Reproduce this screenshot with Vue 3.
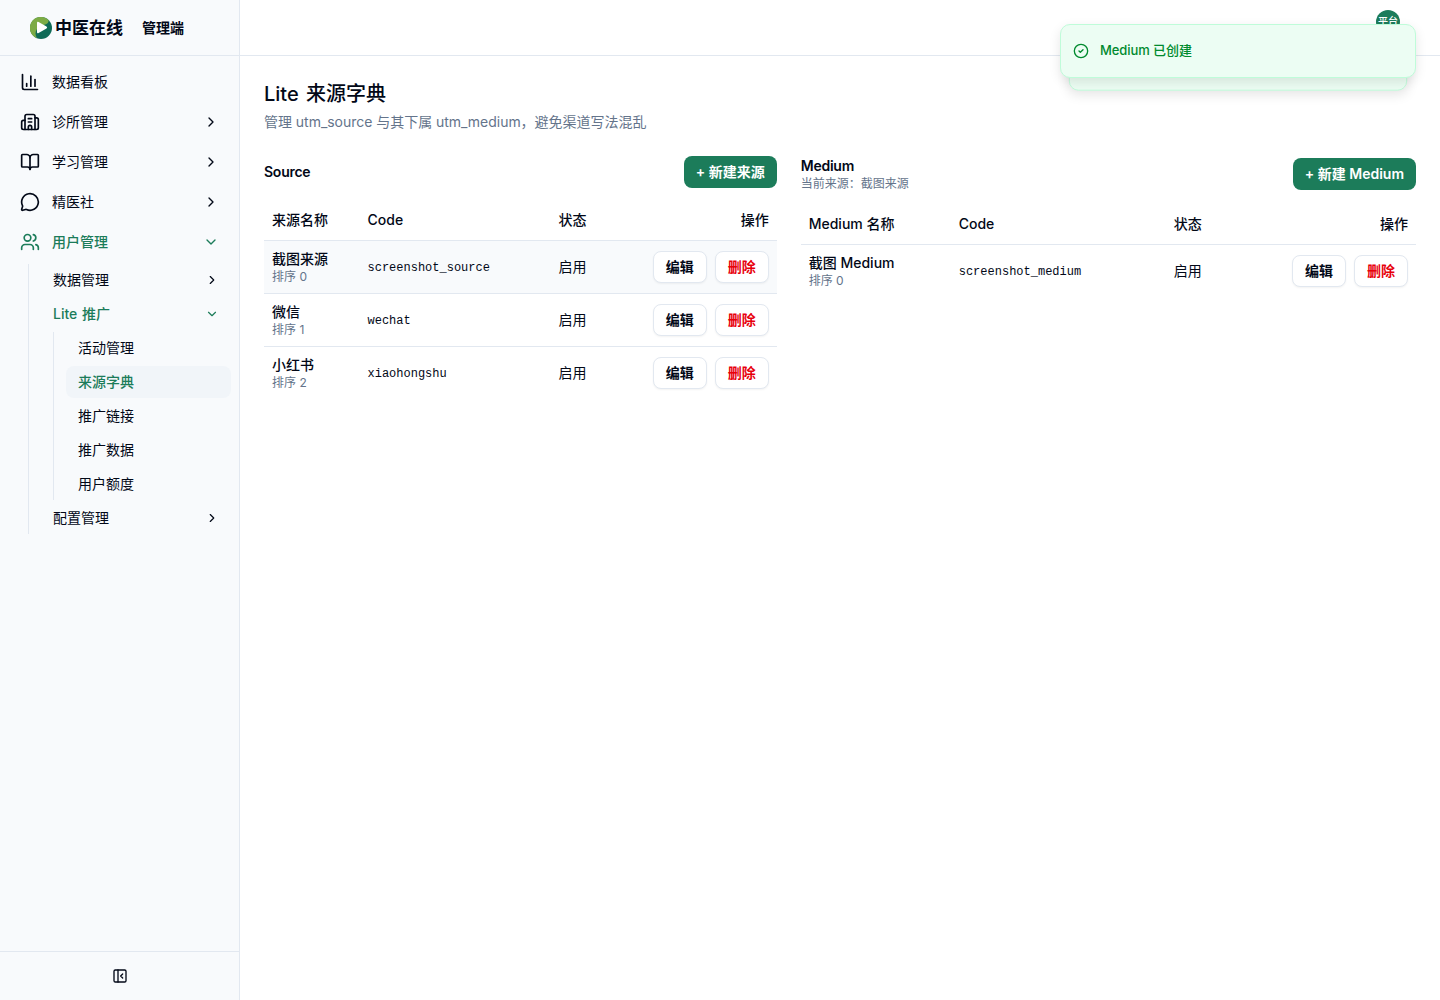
<template>
  <div class="layout">
    <aside class="sidebar">
      <div class="brand">
        <svg class="brand-mark" viewBox="0 0 22 22">
          <circle cx="11" cy="11" r="11" fill="#0f6b57" />
          <path d="M7 21.2A11 11 0 1 1 18.5 3C19 6 16 7.5 13 8L7 12C5 15 5 18 7 21.2z" fill="#7cab45" />
          <path d="M7 6q0-1.8 1.6-1l7.9 4.6q1.3.9 0 1.8l-7.9 4.6q-1.6.8-1.6-1z" fill="#fff" />
        </svg>
        <span class="brand-name">中医在线</span>
        <span class="brand-sub">管理端</span>
      </div>

      <nav class="nav">
        <div
          v-for="item in menu"
          :key="item.label"
          class="nav-item"
          :class="{ active: item.open }"
        >
          <svg class="nav-icon" viewBox="0 0 24 24">
            <path v-for="d in item.icon" :key="d" :d="d" />
          </svg>
          <span class="nav-label">{{ item.label }}</span>
          <svg v-if="item.expandable" class="chevron" viewBox="0 0 24 24">
            <path :d="item.open ? chevronDown : chevronRight" />
          </svg>
        </div>

        <div class="sub-nav">
          <div class="sub-item">
            <span>数据管理</span>
            <svg class="chevron small" viewBox="0 0 24 24"><path :d="chevronRight" /></svg>
          </div>
          <div class="sub-item active">
            <span>Lite 推广</span>
            <svg class="chevron small" viewBox="0 0 24 24"><path :d="chevronDown" /></svg>
          </div>
          <div class="leaf-nav">
            <div
              v-for="leaf in leaves"
              :key="leaf"
              class="leaf"
              :class="{ selected: leaf === current }"
            >{{ leaf }}</div>
          </div>
          <div class="sub-item">
            <span>配置管理</span>
            <svg class="chevron small" viewBox="0 0 24 24"><path :d="chevronRight" /></svg>
          </div>
        </div>
      </nav>

      <div class="sidebar-footer">
        <svg class="collapse-icon" viewBox="0 0 24 24">
          <rect x="3" y="3" width="18" height="18" rx="2" />
          <path d="M9 3v18" />
          <path d="m16 15-3-3 3-3" />
        </svg>
      </div>
    </aside>

    <div class="main">
      <header class="topbar">
        <div class="avatar">平台</div>
      </header>

      <main class="content">
        <div>
          <h1 class="title">Lite 来源字典</h1>
          <p class="subtitle">管理 utm_source 与其下属 utm_medium，避免渠道写法混乱</p>
        </div>

        <div class="panels">
          <section v-for="panel in panels" :key="panel.title" class="panel">
            <div class="panel-head">
              <div>
                <h2 class="panel-title">{{ panel.title }}</h2>
                <p v-if="panel.note" class="note">{{ panel.note }}</p>
              </div>
              <button class="btn primary">{{ panel.create }}</button>
            </div>

            <table class="table" :class="panel.kind">
              <thead>
                <tr>
                  <th class="col-name">{{ panel.nameLabel }}</th>
                  <th class="col-code">Code</th>
                  <th>状态</th>
                  <th class="right">操作</th>
                </tr>
              </thead>
              <tbody>
                <tr v-for="row in panel.rows" :key="row.code" :class="{ picked: row.picked }">
                  <td>
                    <div class="row-name">{{ row.name }}</div>
                    <div class="note">排序 {{ row.sort }}</div>
                  </td>
                  <td class="code">{{ row.code }}</td>
                  <td>启用</td>
                  <td>
                    <div class="actions">
                      <button class="btn outline">编辑</button>
                      <button class="btn outline danger">删除</button>
                    </div>
                  </td>
                </tr>
              </tbody>
            </table>
          </section>
        </div>
      </main>
    </div>

    <div class="toaster">
      <div class="toast back"></div>
      <div class="toast">
        <svg class="toast-icon" viewBox="0 0 24 24">
          <circle cx="12" cy="12" r="10" />
          <path d="m9 12 2 2 4-4" />
        </svg>
        <span class="toast-text">Medium 已创建</span>
      </div>
    </div>
  </div>
</template>

<script setup>
import { ref } from 'vue';

const chevronRight = 'm9 18 6-6-6-6';
const chevronDown = 'm6 9 6 6 6-6';

const menu = [
  {
    label: '数据看板',
    icon: ['M3 3v16a2 2 0 0 0 2 2h16', 'M18 17V9', 'M13 17V5', 'M8 17v-3']
  },
  {
    label: '诊所管理',
    expandable: true,
    icon: [
      'M10 12h4',
      'M10 8h4',
      'M14 21v-3a2 2 0 0 0-4 0v3',
      'M6 10H4a2 2 0 0 0-2 2v7a2 2 0 0 0 2 2h16a2 2 0 0 0 2-2V9a2 2 0 0 0-2-2h-2',
      'M6 21V5a2 2 0 0 1 2-2h8a2 2 0 0 1 2 2v16'
    ]
  },
  {
    label: '学习管理',
    expandable: true,
    icon: [
      'M12 7v14',
      'M3 18a1 1 0 0 1-1-1V4a1 1 0 0 1 1-1h5a4 4 0 0 1 4 4 4 4 0 0 1 4-4h5a1 1 0 0 1 1 1v13a1 1 0 0 1-1 1h-6a3 3 0 0 0-3 3 3 3 0 0 0-3-3z'
    ]
  },
  {
    label: '精医社',
    expandable: true,
    icon: [
      'M2.992 16.342a2 2 0 0 1 .094 1.167l-1.065 3.29a1 1 0 0 0 1.236 1.168l3.413-.998a2 2 0 0 1 1.099.092 10 10 0 1 0-4.777-4.719'
    ]
  },
  {
    label: '用户管理',
    expandable: true,
    open: true,
    icon: [
      'M16 21v-2a4 4 0 0 0-4-4H6a4 4 0 0 0-4 4v2',
      'M16 3.128a4 4 0 0 1 0 7.744',
      'M22 21v-2a4 4 0 0 0-3-3.87',
      'M5 7a4 4 0 1 0 8 0a4 4 0 1 0-8 0'
    ]
  }
];

const leaves = ['活动管理', '来源字典', '推广链接', '推广数据', '用户额度'];
const current = ref('来源字典');

const panels = [
  {
    kind: 'source',
    title: 'Source',
    create: '+ 新建来源',
    nameLabel: '来源名称',
    rows: [
      { name: '截图来源', sort: 0, code: 'screenshot_source', picked: true },
      { name: '微信', sort: 1, code: 'wechat' },
      { name: '小红书', sort: 2, code: 'xiaohongshu' }
    ]
  },
  {
    kind: 'medium',
    title: 'Medium',
    note: '当前来源：截图来源',
    create: '+ 新建 Medium',
    nameLabel: 'Medium 名称',
    rows: [{ name: '截图 Medium', sort: 0, code: 'screenshot_medium' }]
  }
];
</script>

<style>
body {
  background: #fff;
}
</style>

<style scoped>
.layout {
  display: flex;
  height: 100vh;
  overflow: hidden;
  font-family: Inter, "Noto Sans CJK SC", sans-serif;
  font-size: 14px;
  line-height: 20px;
  color: #020817;
}

.layout * {
  box-sizing: border-box;
}

h1,
h2,
p {
  margin: 0;
}

svg {
  flex-shrink: 0;
  fill: none;
  stroke: currentColor;
  stroke-width: 2;
  stroke-linecap: round;
  stroke-linejoin: round;
}

.sidebar {
  width: 240px;
  flex-shrink: 0;
  display: flex;
  flex-direction: column;
  background: #f8fafc;
  border-right: 1px solid #e2e8f0;
}

.brand {
  height: 56px;
  display: flex;
  align-items: center;
  padding-left: 30px;
  border-bottom: 1px solid #e2e8f0;
}

.brand-mark {
  width: 22px;
  height: 22px;
  stroke: none;
}

.brand-name {
  margin-left: 3px;
  font-size: 17px;
  font-weight: 600;
}

.brand-sub {
  margin-left: 19px;
  font-weight: 600;
}

.nav {
  flex: 1;
  padding: 6px 8px;
}

.nav-item {
  height: 40px;
  display: flex;
  align-items: center;
  gap: 12px;
  padding: 0 12px;
}

.nav-icon {
  width: 20px;
  height: 20px;
}

.nav-label {
  flex: 1;
}

.chevron {
  width: 16px;
  height: 16px;
}

.chevron.small {
  width: 14px;
  height: 14px;
}

.active {
  color: #1c7c5a;
  font-weight: 500;
  word-spacing: 1px;
}

.sub-nav {
  display: flex;
  flex-direction: column;
  gap: 2px;
  margin: 2px 0 0 20px;
  padding-left: 12px;
  border-left: 1px solid #e2e8f0;
}

.sub-item {
  height: 32px;
  display: flex;
  align-items: center;
  justify-content: space-between;
  padding: 0 12px;
}

.leaf-nav {
  display: flex;
  flex-direction: column;
  gap: 2px;
  margin-left: 12px;
  padding-left: 12px;
  border-left: 1px solid #e2e8f0;
}

.leaf {
  height: 32px;
  padding: 6px 12px;
  border-radius: 8px;
}

.leaf.selected {
  background: #f1f5f9;
  color: #1c7c5a;
  font-weight: 500;
}

.sidebar-footer {
  height: 49px;
  display: flex;
  align-items: center;
  justify-content: center;
  border-top: 1px solid #e2e8f0;
}

.collapse-icon {
  width: 16px;
  height: 16px;
}

.main {
  flex: 1;
  min-width: 0;
}

.topbar {
  height: 56px;
  display: flex;
  justify-content: flex-end;
  padding: 10px 40px 0;
  border-bottom: 1px solid #e2e8f0;
}

.avatar {
  width: 24px;
  height: 24px;
  border-radius: 50%;
  background: #1c7c5a;
  color: #fff;
  font-size: 10px;
  font-weight: 500;
  line-height: 23px;
  text-align: center;
}

.content {
  display: flex;
  flex-direction: column;
  gap: 24px;
  padding: 24px;
}

.title {
  font-size: 20px;
  line-height: 28px;
  font-weight: 500;
  word-spacing: 2px;
}

.subtitle {
  margin-top: 4px;
  color: #64748b;
  letter-spacing: -0.03px;
}

.panels {
  display: grid;
  grid-template-columns: 5fr 6fr;
  gap: 24px;
  align-items: start;
}

.panel {
  display: flex;
  flex-direction: column;
  gap: 12px;
}

.panel-head {
  display: flex;
  align-items: center;
  justify-content: space-between;
}

.panel-title {
  font-size: 14px;
  line-height: 20px;
  font-weight: 600;
  letter-spacing: -0.25px;
}

.note {
  font-size: 12px;
  line-height: 16px;
  color: #64748b;
}

.btn {
  height: 32px;
  padding: 0 12px;
  border: 0;
  border-radius: 8px;
  font: inherit;
  font-weight: 600;
  color: inherit;
  white-space: nowrap;
}

.btn.primary {
  background: #1c7c5a;
  color: #fff;
}

.btn.outline {
  width: 54px;
  background: #fff;
  border: 1px solid #e2e8f0;
  box-shadow: 0 1px 2px rgba(0, 0, 0, 0.05);
}

.btn.danger {
  color: #e7000b;
}

.table {
  width: 100%;
  table-layout: fixed;
  border-collapse: separate;
  border-spacing: 0;
}

.source .col-name {
  width: 95.5px;
}

.source .col-code {
  width: 191px;
}

.medium .col-name {
  width: 150px;
}

.medium .col-code {
  width: 215px;
}

.table th {
  height: 41px;
  padding: 0 8px;
  text-align: left;
  font-weight: 500;
  border-bottom: 1px solid #e2e8f0;
}

.table th.right {
  text-align: right;
}

.table td {
  height: 53px;
  padding: 8px;
  border-bottom: 1px solid #e2e8f0;
}

.table tbody tr:last-child td {
  height: 52px;
  border-bottom: 0;
}

.picked td {
  background: #f8fafc;
}

.row-name {
  font-weight: 500;
}

.table .code {
  padding-top: 10px;
  font-family: "Liberation Mono", monospace;
  font-size: 12px;
}

.actions {
  display: flex;
  justify-content: flex-end;
  gap: 8px;
}

/* Notifications float above the page */
.toaster {
  position: absolute;
  top: 24px;
  right: 24px;
  width: 356px;
}

.toast {
  position: relative;
  height: 54px;
  display: flex;
  align-items: center;
  gap: 11px;
  padding: 0 12px;
  border: 1px solid #bffcd9;
  border-radius: 10px;
  background: #ecfdf3;
  color: #008a2e;
  font-size: 13px;
  font-weight: 500;
  box-shadow: 0 4px 12px rgba(0, 0, 0, 0.1);
}

.toast.back {
  position: absolute;
  inset: 0;
  transform: translateY(14px) scale(0.95);
}

.toast-icon {
  width: 16px;
  height: 16px;
}

.toast-text {
  padding-bottom: 2px;
  letter-spacing: -0.08px;
}
</style>
